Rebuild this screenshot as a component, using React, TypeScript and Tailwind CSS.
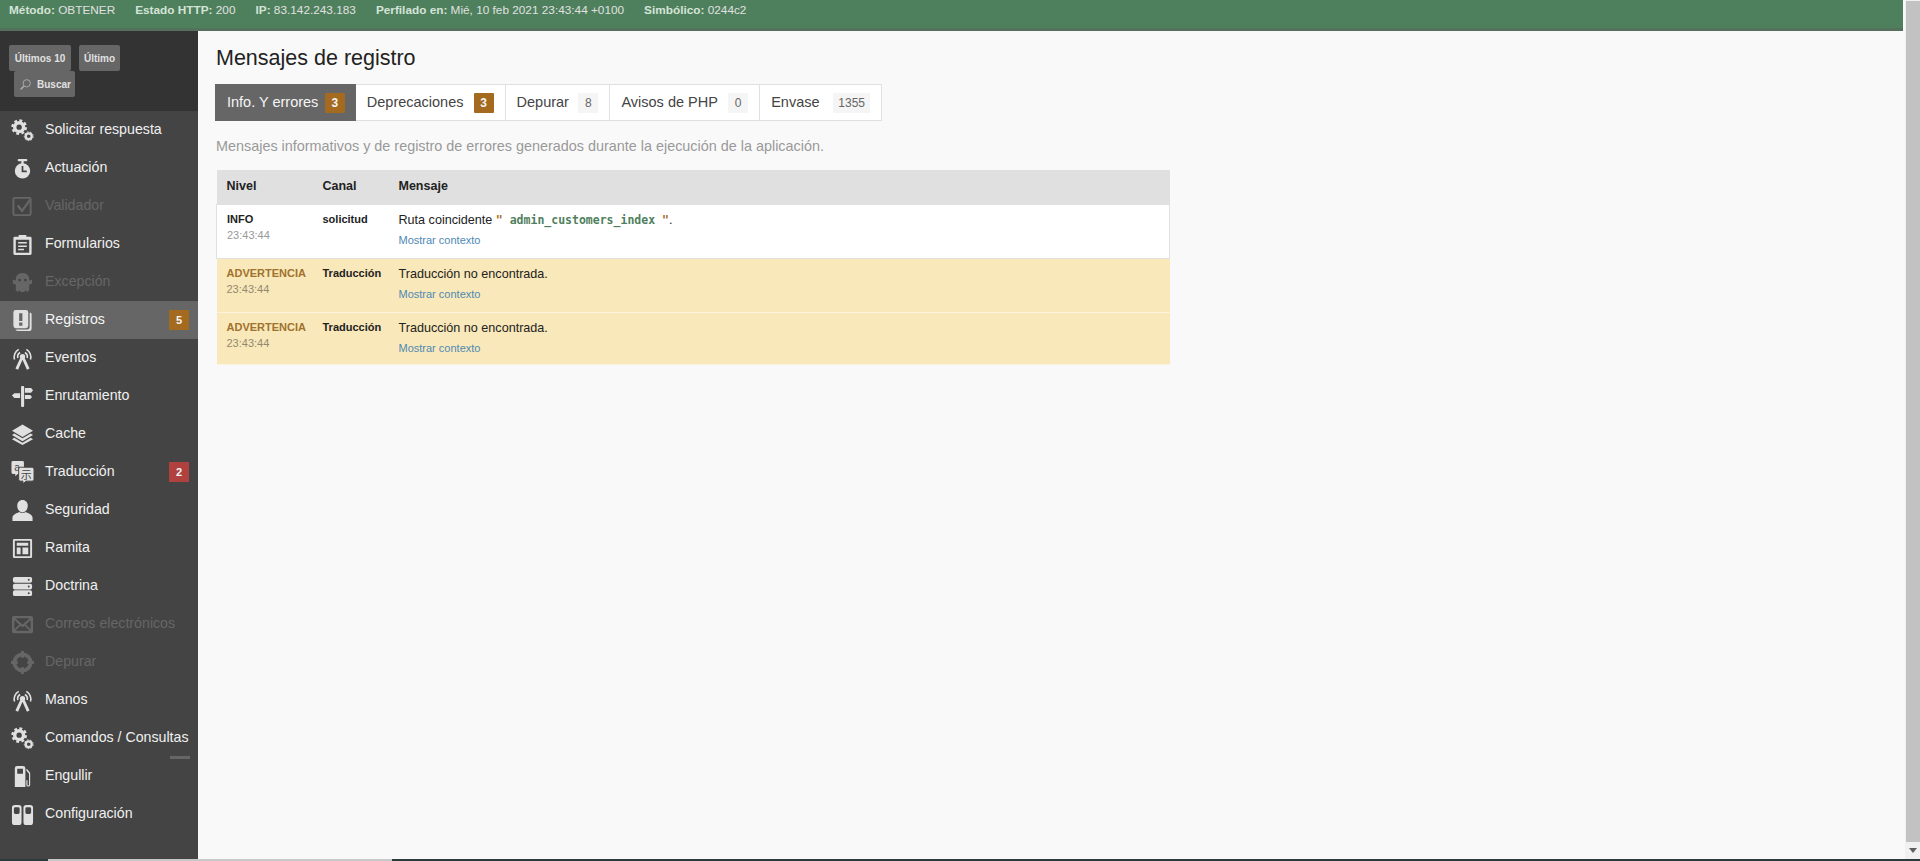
const FONT = "font-['Liberation_Sans',Arial,sans-serif]";

type IconProps = { className?: string };

function Gears({ className }: IconProps) {
  return (
    <svg viewBox="0 0 24 24" className={className} fill="none" stroke="currentColor">
      <circle cx="8.5" cy="8.5" r="4.6" strokeWidth="3.6" />
      <circle cx="8.5" cy="8.5" r="7" strokeWidth="2.4" strokeDasharray="3 2.5" />
      <circle cx="18.5" cy="18" r="3.1" strokeWidth="2.4" />
      <circle cx="18.5" cy="18" r="4.6" strokeWidth="1" strokeDasharray="1.8 1.4" />
    </svg>
  );
}

function Stopwatch({ className }: IconProps) {
  return (
    <svg viewBox="0 0 24 24" className={className} fill="currentColor">
      <rect x="7" y="2" width="10" height="2.5" rx="1" />
      <rect x="10.8" y="4" width="2.4" height="4" />
      <circle cx="12" cy="14.5" r="8" />
      <path d="M12 9.5v5.500h4.500" fill="none" stroke="#444444" strokeWidth="1.8" />
    </svg>
  );
}

function CheckBox({ className }: IconProps) {
  return (
    <svg viewBox="0 0 24 24" className={className} fill="none" stroke="currentColor" strokeWidth="2">
      <rect x="2.5" y="3" width="18" height="18" rx="1.5" />
      <path d="M7 11l4.500 5.500L20 5" strokeWidth="2.4" />
    </svg>
  );
}

function Clipboard({ className }: IconProps) {
  return (
    <svg viewBox="0 0 24 24" className={className} fill="currentColor">
      <path fillRule="evenodd" d="M4 4h4V2h8v2h4a1.500 1.500 0 0 1 1.500 1.500v16A1.500 1.500 0 0 1 20 23H4a1.500 1.500 0 0 1-1.500-1.500v-16A1.500 1.500 0 0 1 4 4zm1 3v13.500h14V7zm2.500 2.500h9V11h-9zm0 3.500h9v1.500h-9zm0 3.500h6V18h-6z" />
    </svg>
  );
}

function Ghost({ className }: IconProps) {
  return (
    <svg viewBox="0 0 24 24" className={className} fill="currentColor">
      <path fillRule="evenodd" d="M12 2c4.500 0 7 3 7 6v2l3-1v4l-3 1v6l-2 2-2-2-1 2h-4l-1-2-2 2-2-2v-6l-3-1V9l3 1V8c0-3 2.500-6 7-6zM9 8a1.500 1.500 0 1 0 0 3 1.500 1.500 0 0 0 0-3zm6 0a1.500 1.500 0 1 0 0 3 1.500 1.500 0 0 0 0-3z" />
    </svg>
  );
}

function Logs({ className }: IconProps) {
  return (
    <svg viewBox="0 0 24 24" className={className} fill="currentColor">
      <path d="M19.500 4h.500a1.500 1.500 0 0 1 1.500 1.500V20a3 3 0 0 1-3 3H7a3 3 0 0 1-2.500-1.500H17a2.500 2.500 0 0 0 2.500-2.500z" />
      <path fillRule="evenodd" d="M5 1h10.500A2.500 2.500 0 0 1 18 3.500v14a2.500 2.500 0 0 1-2.500 2.500H5a2.500 2.500 0 0 1-2.500-2.500v-14A2.500 2.500 0 0 1 5 1zm3.500 3.500v8h3.400v-8zm0 9.500v3.400h3.400V14z" />
    </svg>
  );
}

function Antenna({ className }: IconProps) {
  return (
    <svg viewBox="0 0 24 24" className={className} fill="none" stroke="currentColor">
      <circle cx="12" cy="10" r="2.8" fill="currentColor" stroke="none" />
      <path d="M11 12L6 23M13 12L18 23" strokeWidth="3" />
      <path d="M7.2 11.500A5 5 0 0 1 9.500 5.700M16.800 11.500A5 5 0 0 0 14.500 5.700" strokeWidth="1.7" />
      <path d="M3.700 13A9 9 0 0 1 8 2.500M20.300 13A9 9 0 0 0 16 2.500" strokeWidth="1.7" />
    </svg>
  );
}

function Signpost({ className }: IconProps) {
  return (
    <svg viewBox="0 0 24 24" className={className} fill="currentColor">
      <rect x="10.5" y="1" width="3.2" height="22" rx="1" />
      <path d="M14.500 3H21l2 2.500L21 8h-6.500zM9.500 8.500H3.500L1 11l2.500 2.500h6zM14.500 10.500H20l2 2-2 2h-5.500z" />
    </svg>
  );
}

function Layers({ className }: IconProps) {
  return (
    <svg viewBox="0 0 24 24" className={className} fill="currentColor">
      <path d="M12 1.500L23 8l-11 6.500L1 8z" />
      <path d="M3.500 11L12 16l8.500-5 2.500 1.500-11 6.500-11-6.500z" />
      <path d="M3.500 15.500L12 20.500l8.500-5 2.500 1.500-11 6-11-6z" />
    </svg>
  );
}

function Translate({ className }: IconProps) {
  return (
    <svg viewBox="0 0 24 24" className={className} fill="currentColor">
      <path d="M2 0h10a1.500 1.500 0 0 1 1.500 1.500V12a1.500 1.500 0 0 1-1.500 1.500H7l-2.500 2.500v-2.500H2A1.500 1.500 0 0 1 .5 12V1.500A1.500 1.500 0 0 1 2 0z" />
      <text x="3.5" y="10.5" fontSize="11" fontFamily="'Liberation Sans',sans-serif" fill="#444444">a</text>
      <path d="M10 6.500h12a2 2 0 0 1 2 2V19a2 2 0 0 1-2 2h-6.500l-3 3v-3H10a2 2 0 0 1-2-2V8.500a2 2 0 0 1 2-2z" stroke="#444444" strokeWidth="1" />
      <text x="10.2" y="18.5" fontSize="11.5" fontFamily="'Noto Sans CJK SC',sans-serif" fill="#444444">示</text>
    </svg>
  );
}

function Person({ className }: IconProps) {
  return (
    <svg viewBox="0 0 24 24" className={className} fill="currentColor">
      <path d="M12 1c3.400 0 5.500 2.600 5.500 6s-2 7-5.500 7-5.500-3.600-5.500-7S8.600 1 12 1z" />
      <path d="M9 13.500c1 1.500 5 1.500 6 0 3.500 1 7.500 3 7.500 6V23h-21v-3.500c0-3 4-5 7.500-6z" />
    </svg>
  );
}

function Layout({ className }: IconProps) {
  return (
    <svg viewBox="0 0 24 24" className={className} fill="currentColor">
      <path fillRule="evenodd" d="M3.500 2h17A1.500 1.500 0 0 1 22 3.500v17a1.500 1.500 0 0 1-1.500 1.500h-17A1.500 1.500 0 0 1 2 20.500v-17A1.500 1.500 0 0 1 3.500 2zM4 4v16h16V4zm2 2h12v3H6zm0 5h4v7H6zm6 0h6v7h-6z" />
    </svg>
  );
}

function Database({ className }: IconProps) {
  return (
    <svg viewBox="0 0 24 24" className={className} fill="currentColor">
      <path fillRule="evenodd" d="M4 2h16a2 2 0 0 1 2 2v2a2 2 0 0 1-2 2H4a2 2 0 0 1-2-2V4a2 2 0 0 1 2-2zm14.500 2a1 1 0 1 0 0 2 1 1 0 0 0 0-2z" />
      <path fillRule="evenodd" d="M4 9h16a2 2 0 0 1 2 2v2a2 2 0 0 1-2 2H4a2 2 0 0 1-2-2v-2a2 2 0 0 1 2-2zm14.500 2a1 1 0 1 0 0 2 1 1 0 0 0 0-2z" />
      <path fillRule="evenodd" d="M4 16h16a2 2 0 0 1 2 2v2a2 2 0 0 1-2 2H4a2 2 0 0 1-2-2v-2a2 2 0 0 1 2-2zm14.500 2a1 1 0 1 0 0 2 1 1 0 0 0 0-2z" />
    </svg>
  );
}

function Mail({ className }: IconProps) {
  return (
    <svg viewBox="0 0 24 24" className={className} fill="currentColor">
      <path fillRule="evenodd" d="M3 3h18a2 2 0 0 1 2 2v14a2 2 0 0 1-2 2H3a2 2 0 0 1-2-2V5a2 2 0 0 1 2-2zm1.500 2.500L12 12l7.500-6.500zM3.500 7.500v9.500l5-5zm17 0l-5 4.500 5 5zM10 13.300l-5.500 5.200h15L14 13.300l-2 1.700z" />
    </svg>
  );
}

function Crosshair({ className }: IconProps) {
  return (
    <svg viewBox="0 0 24 24" className={className} fill="none" stroke="currentColor">
      <circle cx="12" cy="12" r="8.5" strokeWidth="4" />
      <path d="M12 0v7M12 17v7M0 12h7M17 12h7" strokeWidth="3" />
    </svg>
  );
}

function Fuel({ className }: IconProps) {
  return (
    <svg viewBox="0 0 24 24" className={className} fill="currentColor">
      <path fillRule="evenodd" d="M6.500 1h6A2.500 2.500 0 0 1 15 3.500V23H4V3.500A2.500 2.500 0 0 1 6.500 1zM6.500 4v5h6V4z" />
      <path d="M16.500 4l3.500 4v12.500a2 2 0 0 1-4 0V16h1.200v4.500a.8.800 0 0 0 1.600 0V9l-3-3.500z" />
    </svg>
  );
}

function Toggles({ className }: IconProps) {
  return (
    <svg viewBox="0 0 24 24" className={className} fill="currentColor">
      <path fillRule="evenodd" d="M4 2h4a3 3 0 0 1 3 3v15a3 3 0 0 1-3 3H4a3 3 0 0 1-3-3V5a3 3 0 0 1 3-3zm.500 2.500a1.500 1.500 0 0 0-1.500 1.500v4a1.500 1.500 0 0 0 1.500 1.500h3a1.500 1.500 0 0 0 1.500-1.500V6a1.500 1.500 0 0 0-1.500-1.500z" />
      <path fillRule="evenodd" d="M16 2h4a3 3 0 0 1 3 3v15a3 3 0 0 1-3 3h-4a3 3 0 0 1-3-3V5a3 3 0 0 1 3-3zm.500 2.500a1.500 1.500 0 0 0-1.500 1.500v4a1.500 1.500 0 0 0 1.500 1.500h3a1.500 1.500 0 0 0 1.500-1.500V6a1.500 1.500 0 0 0-1.500-1.500z" />
    </svg>
  );
}

function SearchIcon({ className }: IconProps) {
  return (
    <svg viewBox="0 0 16 16" className={className} fill="none" stroke="currentColor" strokeWidth="1.2">
      <circle cx="9.5" cy="6.5" r="4.5" />
      <path d="M6 10l-4 4" strokeWidth="1.8" />
    </svg>
  );
}

const menu = [
  { label: "Solicitar respuesta", Icon: Gears },
  { label: "Actuación", Icon: Stopwatch },
  { label: "Validador", Icon: CheckBox, disabled: true },
  { label: "Formularios", Icon: Clipboard },
  { label: "Excepción", Icon: Ghost, disabled: true },
  { label: "Registros", Icon: Logs, active: true, count: "5", countClass: "bg-[#a46a1f]" },
  { label: "Eventos", Icon: Antenna },
  { label: "Enrutamiento", Icon: Signpost },
  { label: "Cache", Icon: Layers },
  { label: "Traducción", Icon: Translate, count: "2", countClass: "bg-[#b0413e]" },
  { label: "Seguridad", Icon: Person },
  { label: "Ramita", Icon: Layout },
  { label: "Doctrina", Icon: Database },
  { label: "Correos electrónicos", Icon: Mail, disabled: true },
  { label: "Depurar", Icon: Crosshair, disabled: true },
  { label: "Manos", Icon: Antenna },
  { label: "Comandos / Consultas", Icon: Gears },
  { label: "Engullir", Icon: Fuel, dash: true },
  { label: "Configuración", Icon: Toggles },
];

const tabs = [
  { label: "Info. Y errores", count: "3", active: true, warn: true, width: "w-[141px]" },
  { label: "Deprecaciones", count: "3", warn: true, width: "w-[150px]" },
  { label: "Depurar", count: "8", width: "w-[105px]" },
  { label: "Avisos de PHP", count: "0", width: "w-[150px]" },
  { label: "Envase", count: "1355", width: "w-[121px]" },
];

const warning = {
  level: "ADVERTENCIA",
  channel: "Traducción",
  message: "Traducción no encontrada.",
};

function TopBar() {
  const items = [
    ["Método:", "OBTENER"],
    ["Estado HTTP:", "200"],
    ["IP:", "83.142.243.183"],
    ["Perfilado en:", "Mié, 10 feb 2021 23:43:44 +0100"],
    ["Simbólico:", "0244c2"],
  ];
  return (
    <header className="flex h-[31px] shrink-0 items-start gap-[20px] border-b-[3px] border-[#55705c] bg-[#4f805d] pl-[9px] pt-[3px] text-[11.8px] leading-[15px] text-[#e0e0e0]">
      {items.map(([k, v]) => (
        <span key={k}>
          <b className="font-bold text-[#d5e4d8]">{k}</b> {v}
        </span>
      ))}
    </header>
  );
}

function Sidebar() {
  return (
    <aside className="flex w-[198px] shrink-0 flex-col bg-[#444444]">
      <div className="h-[80px] shrink-0 bg-[#333333] pl-[9px] pt-[14px]">
        <div className="flex gap-[8px]">
          <span className="flex h-[26px] w-[62px] items-center justify-center rounded-[2px] bg-[#666666] text-[10px] font-bold text-[#e0e0e0]">Últimos 10</span>
          <span className="flex h-[26px] w-[41px] items-center justify-center rounded-[2px] bg-[#666666] text-[10px] font-bold text-[#e0e0e0]">Último</span>
        </div>
        <span className="ml-[5px] flex h-[26px] w-[61px] items-center gap-[5px] rounded-[2px] bg-[#666666] pl-[5px] text-[10px] font-bold text-[#e0e0e0]">
          <SearchIcon className="h-[13px] w-[13px] text-[#aaaaaa]" />
          Buscar
        </span>
      </div>
      <nav className="flex flex-col">
        {menu.map(({ label, Icon, disabled, active, count, countClass, dash }) => (
          <div
            key={label}
            className={`relative flex h-[38px] items-center gap-[11px] pl-[11px] text-[14.2px] ${active ? "bg-[#666666] text-[#f5f5f5]" : disabled ? "text-[#666666]" : "text-[#f0f0f0]"}`}
          >
            <Icon className={`h-[23px] w-[23px] shrink-0 ${disabled ? "text-[#666666]" : "text-[#e0e0e0]"}`} />
            <span className="whitespace-nowrap">{label}</span>
            {count ? (
              <span className={`absolute right-[9px] top-[9px] flex h-[20px] w-[20px] items-center justify-center text-[11px] font-bold text-[#f5f5f5] ${countClass}`}>
                {count}
              </span>
            ) : null}
            {dash ? <span className="absolute right-[8px] top-[-1px] h-[3px] w-[20px] bg-[#666666]" /> : null}
          </div>
        ))}
      </nav>
    </aside>
  );
}

function LogTabs() {
  return (
    <div className="-ml-px flex h-[37px] w-[667px] border border-[#e0e0e0] bg-white text-[14.5px]">
      {tabs.map((tab, i) => (
        <div
          key={tab.label}
          className={`flex items-center justify-between ${tab.width} ${i === 0 ? "-my-px -ml-px bg-[#666666] pl-[12px] pr-[11px] text-[#f5f5f5]" : "border-r border-[#e0e0e0] px-[11px] text-[#444444] last:border-r-0"}`}
        >
          <span className="whitespace-nowrap">{tab.label}</span>
          <span
            className={`flex h-[20px] min-w-[20px] items-center justify-center rounded-[1px] px-[5px] text-[12px] ${tab.warn ? "bg-[#a46a1f] font-bold text-[#f5f5f5]" : "bg-[#f5f5f5] text-[#666666]"}`}
          >
            {tab.count}
          </span>
        </div>
      ))}
    </div>
  );
}

function LogRow({ level, channel, time, warn, children }: { level: string; channel: string; time: string; warn?: boolean; children: React.ReactNode }) {
  return (
    <tr className={warn ? "h-[54px] border-b border-[#fbf3dd] bg-[#f9e8b9] last:h-[52px]" : "h-[54px] border border-[#e0e0e0] bg-white"}>
      <td className="pl-[10px] pt-[7px] align-top">
        <div className={`text-[11px] font-bold leading-[14px] ${warn ? "text-[#a0722e]" : "text-[#222222]"}`}>{level}</div>
        <div className={`mt-[2px] text-[11px] leading-[14px] ${warn ? "text-[#94896f]" : "text-[#999999]"}`}>{time}</div>
      </td>
      <td className="pl-[10px] pt-[7px] align-top text-[11px] font-bold leading-[14px] text-[#222222]">{channel}</td>
      <td className="pl-[10px] pt-[7px] align-top">
        <div className="text-[12.6px] leading-[16px] text-[#222222]">{children}</div>
        <div className="mt-[5px] text-[11px] leading-[14px] text-[#4f88b5]">Mostrar contexto</div>
      </td>
    </tr>
  );
}

function Scrollbar() {
  return (
    <div className="flex w-[15px] shrink-0 flex-col bg-[#f1f1f1]">
      <div className="h-[1px] bg-[#f1f1f1]" />
      <div className="ml-[1px] flex-1 bg-[#c2c2c2]" />
      <div className="flex h-[17px] items-center justify-center text-[#606060]">
        <svg viewBox="0 0 8 5" className="h-[5px] w-[8px]" fill="currentColor">
          <path d="M0 0h8L4 5z" />
        </svg>
      </div>
    </div>
  );
}

export default function App() {
  return (
    <div className={`flex h-[861px] w-[1920px] flex-col overflow-hidden bg-[#f9f9f9] ${FONT}`}>
      <div className="flex min-h-0 flex-1">
        <div className="flex min-w-0 flex-1 flex-col pr-[2px]">
          <TopBar />
          <div className="flex min-h-0 flex-1">
            <Sidebar />
            <main className="flex-1 pl-[18px] pt-[14px]">
              <h2 className="mb-[12px] text-[21.5px] font-normal leading-[27px] text-[#222222]">Mensajes de registro</h2>
              <LogTabs />
              <p className="mt-[16px] text-[14.4px] leading-[18px] text-[#999999]">
                Mensajes informativos y de registro de errores generados durante la ejecución de la aplicación.
              </p>
              <table className="mt-[15px] w-[954px] table-fixed border-collapse text-left">
                <colgroup>
                  <col className="w-[96px]" />
                  <col className="w-[76px]" />
                  <col />
                </colgroup>
                <thead>
                  <tr className="h-[34px] bg-[#e0e0e0] text-[12.5px] text-[#222222]">
                    <th className="pl-[10px] font-bold">Nivel</th>
                    <th className="pl-[10px] font-bold">Canal</th>
                    <th className="pl-[10px] font-bold">Mensaje</th>
                  </tr>
                </thead>
                <tbody>
                  <LogRow level="INFO" channel="solicitud" time="23:43:44">
                    Ruta coincidente <span className="font-['DejaVu_Sans_Mono',monospace] text-[11.5px] font-bold text-[#4f805d]"><span className="text-[#a46a1f]">"</span> admin_customers_index <span className="text-[#a46a1f]">"</span></span>.
                  </LogRow>
                  <LogRow level={warning.level} channel={warning.channel} time="23:43:44" warn>
                    {warning.message}
                  </LogRow>
                  <LogRow level={warning.level} channel={warning.channel} time="23:43:44" warn>
                    {warning.message}
                  </LogRow>
                </tbody>
              </table>
            </main>
          </div>
        </div>
        <Scrollbar />
      </div>
      <div className="flex h-[2px] shrink-0 bg-[#2c3a3c]">
        <div className="ml-[48px] w-[344px] bg-[#c8c8c8]" />
      </div>
    </div>
  );
}
